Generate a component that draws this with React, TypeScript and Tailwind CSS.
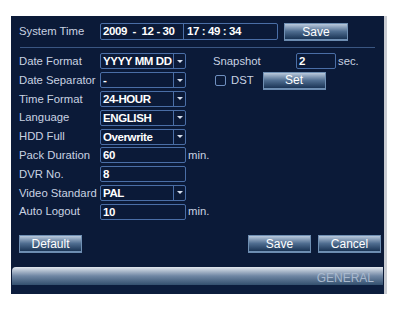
import React from 'react';

const btn =
  'h-[17px] flex items-center justify-center text-[12px] text-white border border-[#6f8fb3] bg-gradient-to-b from-[#b9c9dc] via-[#4f6d90] to-[#1b3556] shadow-[0_1px_0_#6b8bb0]';

const val = 'text-[11.5px] font-bold text-white tracking-[-0.4px] leading-[14px]';

function Label({ children }: { children: React.ReactNode }) {
  return <div className="w-[81px] text-[11.3px] text-[#c9d2e2] whitespace-nowrap">{children}</div>;
}

function Combo({ value }: { value: string }) {
  return (
    <div className="w-[86px] h-[16px] flex border border-[#4a6ea6] rounded-[2px]">
      <div className={`flex-1 pl-[2px] ${val} whitespace-nowrap overflow-hidden`}>{value}</div>
      <div className="w-[12px] border-l border-[#4a6ea6] flex items-center justify-center">
        <div className="w-0 h-0 border-l-[3px] border-r-[3px] border-t-[3px] border-l-transparent border-r-transparent border-t-[#d8e0ee]" />
      </div>
    </div>
  );
}

function Field({ value, unit, w = 'w-[86px]' }: { value: string; unit?: string; w?: string }) {
  return (
    <div className="flex items-center">
      <div className={`${w} h-[16px] border border-[#4a6ea6] rounded-[2px] pl-[2px] ${val}`}>{value}</div>
      {unit && <span className="ml-[2px] text-[11.3px] text-[#c9d2e2]">{unit}</span>}
    </div>
  );
}

function Row({ label, children }: { label: string; children: React.ReactNode }) {
  return (
    <div className="h-[18.8px] flex items-center">
      <Label>{label}</Label>
      {children}
    </div>
  );
}

export default function App() {
  return (
    <div className="w-[400px] h-[311px] bg-white pt-[16px] pl-[11px]" style={{ fontFamily: '"Liberation Sans", Arial, sans-serif' }}>
      <div className="flex">
        <div className="w-[373px] h-[278px] bg-[#0b1a38] flex flex-col">
          {/* system time */}
          <div className="h-[31px] flex items-center pl-[8px]">
            <Label>System Time</Label>
            <div className={`w-[178px] h-[17px] flex border border-[#4a6ea6] rounded-[2px] ${val} leading-[15px]`}>
              <div className="w-[83px] pl-[2px] border-r border-[#4a6ea6] whitespace-pre">2009  -  12 - 30</div>
              <div className="pl-[3px] whitespace-pre">17 : 49 : 34</div>
            </div>
            <div className={`${btn} w-[64px] ml-[6px]`}>Save</div>
          </div>
          <div className="mx-[9px] h-px bg-[#3a5682]" />

          <div className="flex pl-[8px] pt-[4px]">
            <div className="flex flex-col w-[194px]">
              <Row label="Date Format"><Combo value="YYYY MM DD" /></Row>
              <Row label="Date Separator"><Combo value="-" /></Row>
              <Row label="Time Format"><Combo value="24-HOUR" /></Row>
              <Row label="Language"><Combo value="ENGLISH" /></Row>
              <Row label="HDD Full"><Combo value="Overwrite" /></Row>
              <Row label="Pack Duration"><Field value="60" unit="min." /></Row>
              <Row label="DVR No."><Field value="8" /></Row>
              <Row label="Video Standard"><Combo value="PAL" /></Row>
              <Row label="Auto Logout"><Field value="10" unit="min." /></Row>
            </div>
            <div className="flex flex-col">
              <div className="h-[18.8px] flex items-center">
                <div className="w-[83px] text-[11.3px] text-[#c9d2e2]">Snapshot</div>
                <Field value="2" unit="sec." w="w-[40px]" />
              </div>
              <div className="h-[18.8px] flex items-center pl-[2px]">
                <div className="w-[11px] h-[11px] border border-[#6f8fbf] rounded-[2px]" />
                <span className="ml-[5px] text-[11.3px] text-[#c9d2e2]">DST</span>
                <div className={`${btn} w-[63px] ml-[9px]`}>Set</div>
              </div>
            </div>
          </div>

          <div className="flex items-center pl-[8px] pr-[3px] mt-[14px]">
            <div className={`${btn} w-[63px]`}>Default</div>
            <div className="flex-1" />
            <div className={`${btn} w-[63px]`}>Save</div>
            <div className={`${btn} w-[63px] ml-[7px]`}>Cancel</div>
          </div>

          <div className="mt-[15px] h-[18px] mx-[1px] rounded-tl-[4px] bg-gradient-to-b from-[#e2e7ee] via-[#6f86a3] to-[#33506f] flex items-end justify-end pr-[9px]">
            <span className="text-[12px] text-[#a9b9ce] leading-[14px]">GENERAL</span>
          </div>
          <div className="flex-1 bg-[#0c1d3d]" />
        </div>
        <div className="w-[3px] h-[278px] bg-[#c9ccd2]" />
      </div>
    </div>
  );
}
